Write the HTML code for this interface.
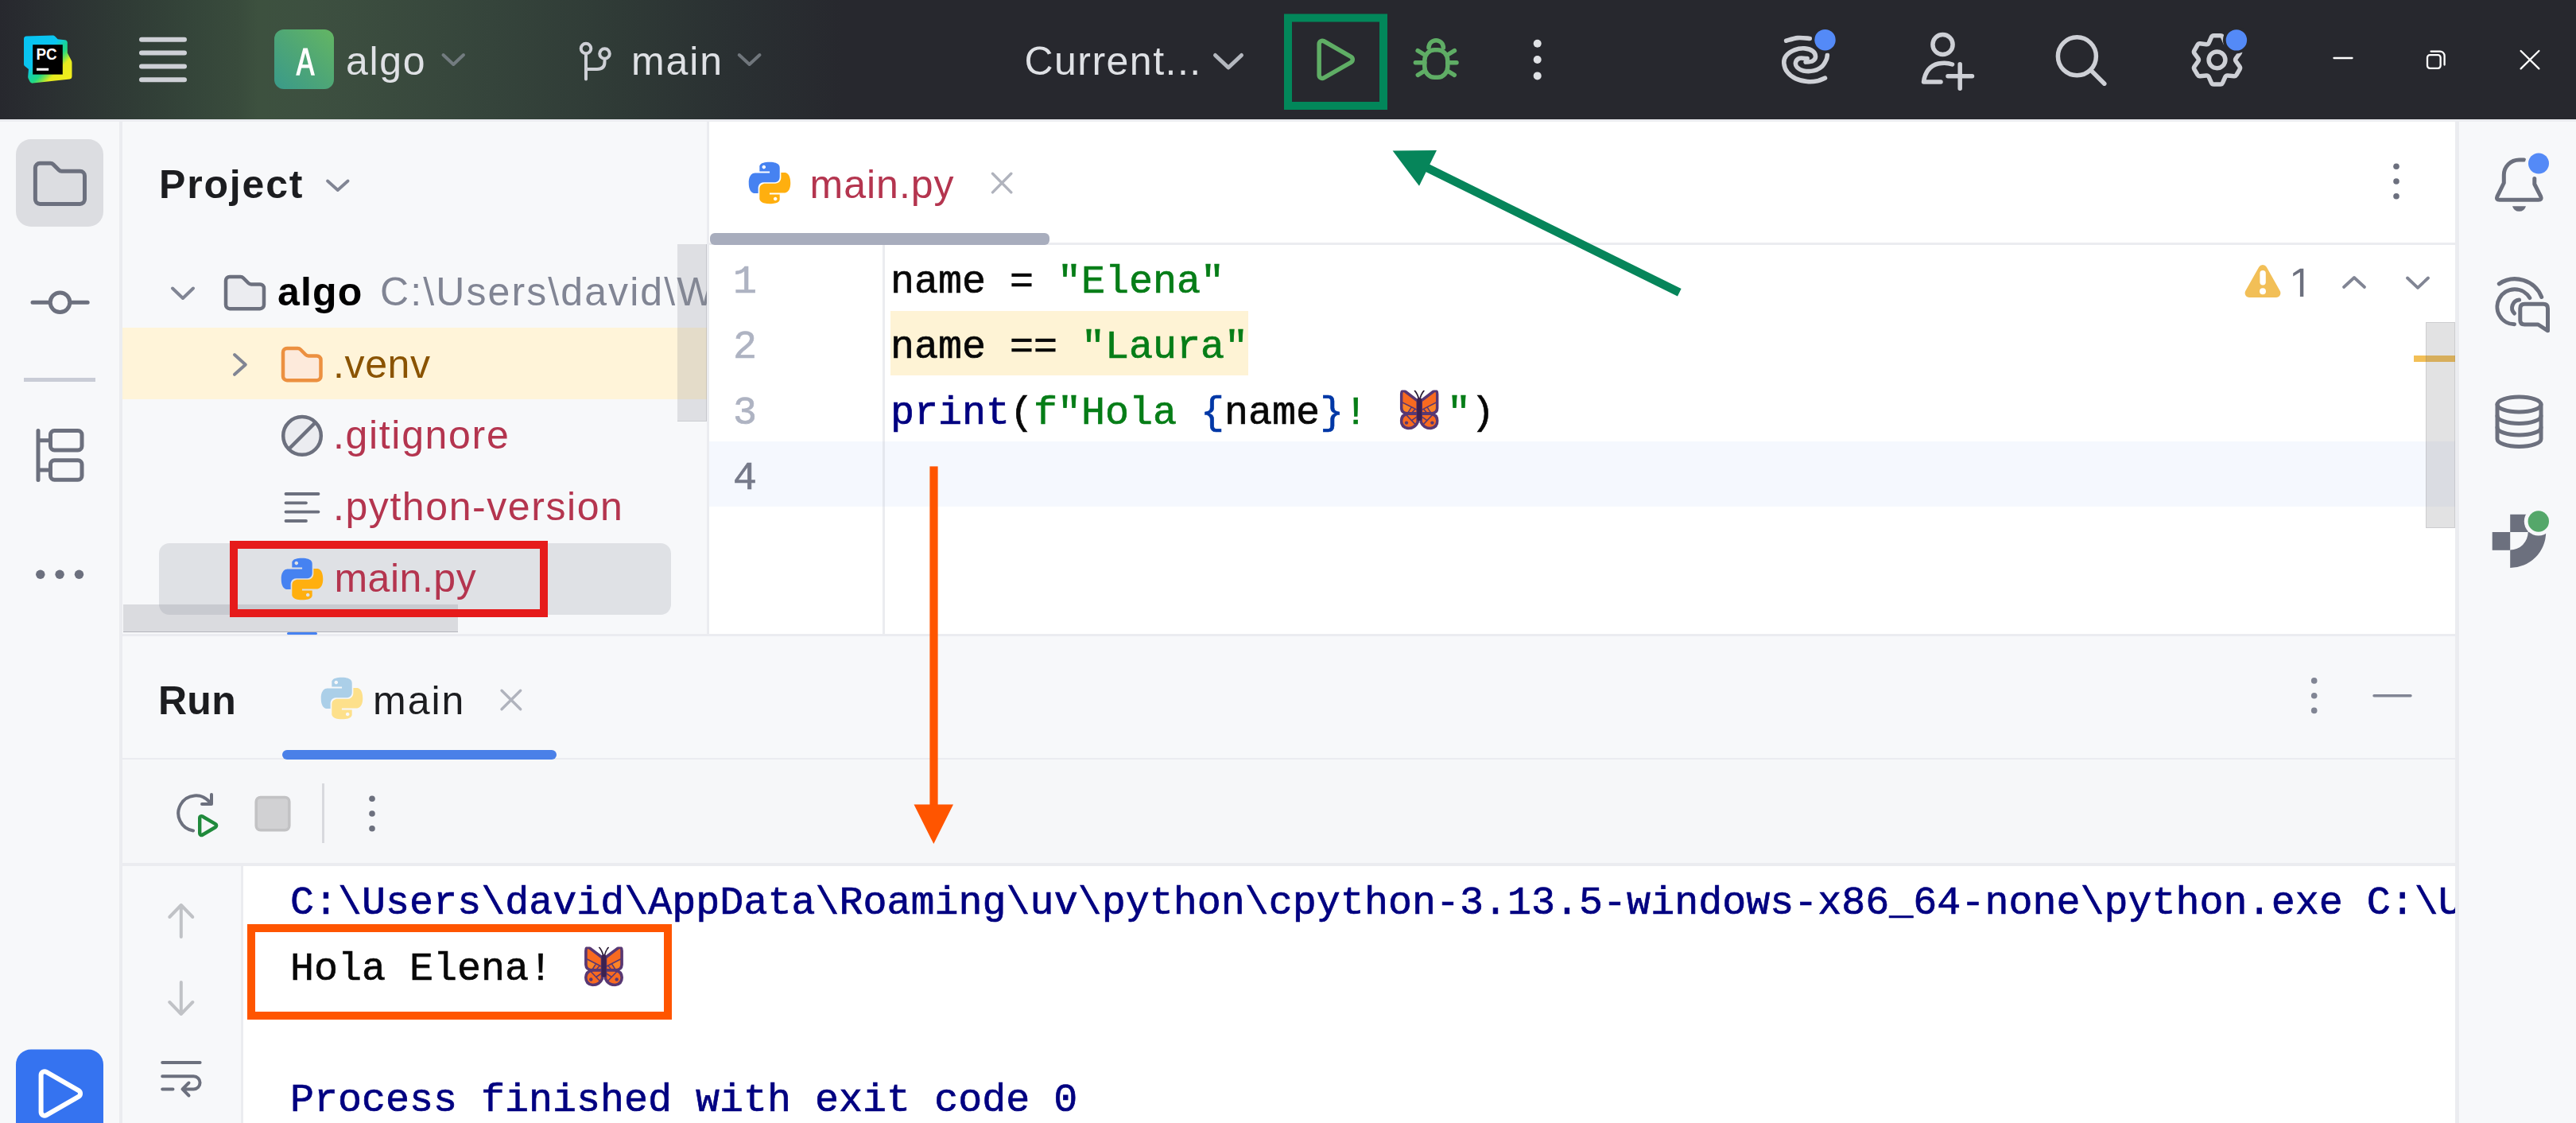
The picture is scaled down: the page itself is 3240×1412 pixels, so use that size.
<!DOCTYPE html>
<html>
<head>
<meta charset="utf-8">
<title>algo – main.py</title>
<style>
*{box-sizing:border-box;margin:0;padding:0}
html,body{width:3240px;height:1412px;overflow:hidden;background:#f7f8fa}
body{font-family:"Liberation Sans",sans-serif;position:relative}
#root{position:absolute;left:0;top:0;width:3240px;height:1412px;overflow:hidden;background:#f7f8fa}
.abs{position:absolute}
.t{position:absolute;white-space:nowrap;line-height:1;font-size:50px;font-family:"Liberation Sans",sans-serif}
.m{position:absolute;white-space:pre;line-height:1;font-size:50px;font-family:"Liberation Mono",monospace;-webkit-text-stroke:0.7px currentColor}
svg{position:absolute;left:0;top:0;overflow:visible}
/* title bar */
#titlebar{left:0;top:0;width:3240px;height:150px;background:#27282e;overflow:hidden}
#tb-glow{left:0;top:0;width:1200px;height:150px;background:linear-gradient(to right,#27282e 0px,#2a2e31 50px,#2f3a35 150px,#35463a 250px,#394b3c 300px,#3d513f 325px,#3d5040 390px,#3a4b3e 490px,#35443b 620px,#2f3a36 780px,#2a3032 920px,#27282e 1060px)}
#tb-line{left:0;top:150px;width:3240px;height:3px;background:#ebecf0}
/* panels */
#leftbar{left:0;top:153px;width:150px;height:1259px;background:#f7f8fa}
#leftbar-b{left:150px;top:153px;width:4px;height:1259px;background:#ebecf0}
#project{left:154px;top:153px;width:735px;height:644px;background:#f7f8fa;overflow:hidden}
#proj-b{left:889px;top:153px;width:3px;height:644px;background:#ebecf0}
#editor{left:892px;top:153px;width:2196px;height:644px;background:#fff;overflow:hidden}
#rightbar-b{left:3088px;top:153px;width:5px;height:1259px;background:#ebecf0}
#rightbar{left:3093px;top:153px;width:147px;height:1259px;background:#f7f8fa}
#hsplit{left:154px;top:797px;width:2934px;height:3px;background:#ebecf0}
#run{left:154px;top:800px;width:2934px;height:612px;background:#f7f8fa;overflow:hidden}
</style>
</head>
<body>
<div id="root">

<!-- ================= TITLE BAR ================= -->
<div id="titlebar" class="abs">
  <div id="tb-glow" class="abs"></div>
</div>
<div id="tb-line" class="abs"></div>

<!-- ================= PANELS ================= -->
<div id="leftbar" class="abs"></div>
<div id="leftbar-b" class="abs"></div>
<div id="project" class="abs"></div>
<div id="proj-b" class="abs"></div>
<div id="editor" class="abs"></div>
<div id="rightbar-b" class="abs"></div>
<div id="rightbar" class="abs"></div>
<div id="hsplit" class="abs"></div>
<div id="run" class="abs"></div>

<!--TB-START--><!-- title bar content -->
<svg width="3240" height="150" viewBox="0 0 3240 150" style="z-index:2">
  <defs>
    <linearGradient id="gA" x1="0" y1="1" x2="1" y2="0">
      <stop offset="0" stop-color="#3a9a8a"/><stop offset="0.5" stop-color="#4ea676"/><stop offset="1" stop-color="#64b663"/>
    </linearGradient>
    <linearGradient id="pc1" gradientUnits="userSpaceOnUse" x1="32" y1="46" x2="88" y2="102">
      <stop offset="0" stop-color="#07c3f2"/><stop offset="0.40" stop-color="#0bc5f0"/><stop offset="0.52" stop-color="#17d1a0"/><stop offset="0.60" stop-color="#21d983"/><stop offset="0.68" stop-color="#7fe34a"/><stop offset="0.75" stop-color="#e6ec20"/><stop offset="1" stop-color="#f4ee1b"/>
    </linearGradient>
  </defs>
  <!-- PyCharm logo -->
  <path d="M30 49 Q30 45.7 33.3 45.6 L66.5 44.4 Q68 44.3 69 45.5 L72.7 49.2 L81.5 50.2 Q84.5 50.5 84.8 53.5 V66.5 L90 76.5 Q90.5 77.5 90.5 79 V96 Q90.5 99 87.7 99.5 L41.5 104.6 Q38.5 104.9 37.5 102.500 L35.5 98.5 Q35 97 35.3 95 L36 87 L31 83 Q30 82 30 80.5 Z" fill="url(#pc1)"/>
  <rect x="41.200" y="56.200" width="37.600" height="37.400" fill="#000"/>
  <text x="45.400" y="75" font-family="Liberation Sans, sans-serif" font-weight="700" font-size="19.800" fill="#fff" textLength="26.200" lengthAdjust="spacingAndGlyphs">PC</text>
  <rect x="46" y="85.700" width="15.200" height="3.100" fill="#fff"/>
  <!-- hamburger -->
  <g stroke="#ced0d6" stroke-width="6" stroke-linecap="round">
    <line x1="178" y1="49.8" x2="232" y2="49.8"/><line x1="178" y1="66.6" x2="232" y2="66.6"/>
    <line x1="178" y1="83.4" x2="232" y2="83.4"/><line x1="178" y1="100.2" x2="232" y2="100.2"/>
  </g>
  <!-- project badge -->
  <rect x="345" y="37" width="75" height="75" rx="12" fill="url(#gA)"/>
  <path d="M372.2 94.7 L381.4 60.4 H386.8 L396 94.7 H391.4 L389 85.4 H379.2 L376.800 94.7 Z M380.300 81.300 H387.900 L384.100 66.500 Z" fill="#fff" fill-rule="evenodd"/>
  <polyline points="557.5,69 570.3,81 583,69" fill="none" stroke="#737c80" stroke-width="4" stroke-linecap="round" stroke-linejoin="round"/>
  <!-- branch icon -->
  <g fill="none" stroke="#ced0d6" stroke-width="4" stroke-linecap="round">
    <circle cx="737" cy="61" r="6.3"/><circle cx="760.5" cy="67.5" r="6.3"/>
    <path d="M737 69.5 V99.5 M760.5 76 V78 Q760.5 87 751 87 H738"/>
  </g>
  <polyline points="929.7,69 942.6,81 955.5,69" fill="none" stroke="#70767c" stroke-width="4" stroke-linecap="round" stroke-linejoin="round"/>
  <!-- run config chevron -->
  <polyline points="1528.5,69.5 1545,85 1561.5,69.5" fill="none" stroke="#b4b8bf" stroke-width="5" stroke-linecap="round" stroke-linejoin="round"/>
  <!-- highlighted run -->
  <rect x="1620" y="22.5" width="120" height="110.5" fill="none" stroke="#02875a" stroke-width="10"/>
  <path d="M1659.15 55.22 A4.00 4.00 0 0 1 1665.14 51.75 L1699.27 71.38 A4.00 4.00 0 0 1 1699.27 78.32 L1665.14 97.95 A4.00 4.00 0 0 1 1659.15 94.48 Z" fill="none" stroke="#5fad65" stroke-width="5.500"/>
  <!-- debug -->
  <g fill="none" stroke="#5fad65" stroke-width="5.500" stroke-linecap="round">
    <rect x="1791.800" y="62.650" width="29" height="34.650" rx="12.500" ry="13.500"/>
    <path d="M1797 59.900 A9.200 9.200 0 0 1 1815.400 59.900"/>
    <path d="M1792 69 L1783.200 63.700 M1791.800 78.700 H1780.300 M1792 89 L1783.300 94.300 M1820.600 69 L1829.400 63.700 M1820.800 78.700 H1832 M1820.600 89 L1829.300 94.300"/>
  </g>
  <g fill="#dfe1e5"><circle cx="1933.7" cy="54.7" r="5"/><circle cx="1933.7" cy="75" r="5"/><circle cx="1933.7" cy="95.4" r="5"/></g>
  <!-- AI swirl -->
  <g fill="none" stroke="#ced0d6" stroke-width="5.600" stroke-linecap="round">
    <path d="M2246.63 51.23 C2249.04 50.63 2256.12 48.10 2261.06 47.63 C2266.00 47.16 2273.74 48.30 2276.28 48.43"/>
    <path d="M2271.07 78.08 C2272.48 77.88 2277.42 77.94 2279.49 76.88 C2281.56 75.81 2283.36 73.74 2283.49 71.67 C2283.63 69.60 2282.56 66.26 2280.29 64.46 C2278.02 62.65 2273.74 61.12 2269.87 60.85 C2266.00 60.58 2260.92 61.32 2257.05 62.85 C2253.18 64.39 2248.84 67.26 2246.63 70.06 C2244.43 72.87 2243.56 76.21 2243.83 79.68 C2244.10 83.15 2245.77 87.69 2248.24 90.90 C2250.71 94.10 2254.51 96.97 2258.65 98.91 C2262.79 100.85 2268.54 102.05 2273.08 102.52 C2277.62 102.98 2282.16 102.45 2285.90 101.71 C2289.64 100.98 2293.91 98.71 2295.51 98.11"/>
    <path d="M2273.08 73.67 C2271.47 73.60 2265.87 72.53 2263.46 73.27 C2261.06 74.00 2259.19 76.21 2258.65 78.08 C2258.12 79.95 2258.65 82.68 2260.26 84.49 C2261.86 86.29 2264.80 88.16 2268.27 88.89 C2271.74 89.63 2277.22 89.76 2281.09 88.89 C2284.96 88.03 2288.84 86.02 2291.51 83.69 C2294.18 81.35 2295.98 77.28 2297.12 74.87 C2298.25 72.47 2298.12 70.20 2298.32 69.26"/>
  </g>
  <circle cx="2295.500" cy="50.200" r="16.500" fill="#27282e"/>
  <circle cx="2295.500" cy="50.200" r="13.200" fill="#548af7"/>
  <!-- add user -->
  <g fill="none" stroke="#ced0d6" stroke-width="5.5" stroke-linecap="round" stroke-linejoin="round">
    <circle cx="2443.5" cy="56" r="12.6"/>
    <path d="M2441 103 H2419.5 Q2422 84 2438 80 Q2448 78 2455.5 81"/>
    <path d="M2450 95.7 H2480.5 M2465.2 80.7 V111.2"/>
  </g>
  <!-- search -->
  <g fill="none" stroke="#ced0d6" stroke-width="5.5" stroke-linecap="round">
    <circle cx="2612.4" cy="70.8" r="24"/><path d="M2629.8 88.2 L2646.8 105.2"/>
  </g>
  <!-- gear -->
  <g fill="none" stroke="#ced0d6" stroke-width="5.5" stroke-linejoin="round">
    <path id="gearpath" d="M2795.57 46.58 A3.20 3.20 0 0 0 2792.65 44.68 L2784.35 44.68 A3.20 3.20 0 0 0 2781.43 46.58 L2778.25 53.77 A3.20 3.20 0 0 1 2774.98 55.65 L2767.17 54.82 A3.20 3.20 0 0 0 2764.05 56.40 L2759.91 63.58 A3.20 3.20 0 0 0 2760.09 67.07 L2764.72 73.41 A3.20 3.20 0 0 1 2764.72 77.19 L2760.09 83.53 A3.20 3.20 0 0 0 2759.91 87.02 L2764.05 94.20 A3.20 3.20 0 0 0 2767.17 95.78 L2774.98 94.95 A3.20 3.20 0 0 1 2778.25 96.83 L2781.43 104.02 A3.20 3.20 0 0 0 2784.35 105.92 L2792.65 105.92 A3.20 3.20 0 0 0 2795.57 104.02 L2798.75 96.83 A3.20 3.20 0 0 1 2802.02 94.95 L2809.83 95.78 A3.20 3.20 0 0 0 2812.95 94.20 L2817.09 87.02 A3.20 3.20 0 0 0 2816.91 83.53 L2812.28 77.19 A3.20 3.20 0 0 1 2812.28 73.41 L2816.91 67.07 A3.20 3.20 0 0 0 2817.09 63.58 L2812.95 56.40 A3.20 3.20 0 0 0 2809.83 54.82 L2802.02 55.65 A3.20 3.20 0 0 1 2798.75 53.77 Z"/>
    <circle cx="2788.500" cy="75.300" r="10.400"/>
  </g>
  <circle cx="2812.900" cy="50.400" r="17" fill="#27282e"/>
  <circle cx="2812.900" cy="50.400" r="13.200" fill="#548af7"/>
  <!-- window controls -->
  <g fill="none" stroke="#fff" stroke-width="2.3" stroke-linecap="round">
    <path d="M2935.5 73 H2958.5"/>
    <rect x="3053" y="69.2" width="16.6" height="16.6" rx="3.2"/>
    <path d="M3057.5 64.6 H3069 A5.6 5.6 0 0 1 3074.6 70.2 V81.5"/>
    <path d="M3170.6 64 L3193.4 86.4 M3193.4 64 L3170.6 86.4"/>
  </g>
</svg>
<div class="t" id="t-algo" style="left:435.00px;top:52.4px;color:#dfe1e5;z-index:3;letter-spacing:1.667px">algo</div>
<div class="t" id="t-main" style="left:794.00px;top:52.4px;color:#dfe1e5;z-index:3;letter-spacing:1.932px">main</div>
<div class="t" id="t-cur" style="left:1288.40px;top:52.4px;color:#dfe1e5;z-index:3;letter-spacing:1.487px">Current...</div>
<!--TB-END-->
<!--LB-START--><!-- left toolbar -->
<div class="abs" style="left:20px;top:175px;width:110px;height:110px;border-radius:19px;background:#dcdde1"></div>
<svg width="160" height="1412" viewBox="0 0 160 1412" style="z-index:2">
  <g fill="none" stroke="#6c707e" stroke-width="5" stroke-linecap="round" stroke-linejoin="round">
    <!-- folder -->
    <path d="M44.4 211 A5.8 5.8 0 0 1 50.2 205.2 H63.5 A5 5 0 0 1 67 206.7 L74 213.7 A5 5 0 0 0 77.5 215.2 H100.7 A5.8 5.8 0 0 1 106.5 221 V250.6 A5.8 5.8 0 0 1 100.7 256.4 H50.2 A5.8 5.8 0 0 1 44.4 250.6 Z"/>
    <!-- commit -->
    <circle cx="75.5" cy="380.3" r="12.3"/>
    <path d="M41 380.3 H62 M89 380.3 H110.2"/>
    <!-- structure -->
    <path d="M48 541.5 V603.5 M49 553.7 H61 M49 591 H61"/>
    <rect x="63.5" y="541.5" width="39.5" height="24.5" rx="5"/>
    <rect x="63.5" y="578.8" width="39.5" height="24.5" rx="5"/>
  </g>
  <rect x="30" y="475" width="90" height="5" fill="#c9ccd6"/>
  <g fill="#6c707e"><circle cx="50.8" cy="722.2" r="5.7"/><circle cx="75.1" cy="722.2" r="5.7"/><circle cx="99.5" cy="722.2" r="5.7"/></g>
  <!-- run tool window button -->
  <rect x="20" y="1319.5" width="110" height="110" rx="19" fill="#3573f0"/>
  <path d="M51.60 1351.77 A4.50 4.50 0 0 1 58.34 1347.87 L98.80 1371.10 A4.50 4.50 0 0 1 98.80 1378.90 L58.34 1402.13 A4.50 4.50 0 0 1 51.60 1398.23 Z" fill="none" stroke="#fff" stroke-width="6"/>
</svg>
<!--LB-END-->
<!--PJ-START--><!-- project panel -->
<svg width="0" height="0" style="position:absolute">
  <defs>
    <symbol id="py" viewBox="0 0 16 16">
      <path d="M7.96 1C4.4 1 4.62 2.55 4.62 2.55V4.16H8.02V4.64H3.27C3.27 4.64 1 4.38 1 7.99C1 11.6 2.98 11.47 2.98 11.47H4.17V9.8C4.17 9.8 4.1 7.81 6.12 7.81H9.5C9.5 7.81 11.39 7.84 11.39 5.97V2.88C11.39 2.88 11.68 1 7.96 1ZM6.08 2.08C6.42 2.08 6.69 2.35 6.69 2.69C6.69 3.03 6.42 3.3 6.08 3.3C5.74 3.3 5.47 3.03 5.47 2.69C5.47 2.35 5.74 2.08 6.08 2.08Z" fill="var(--pb,#4682f1)"/>
      <path d="M8.04 15C11.6 15 11.38 13.45 11.38 13.45V11.84H7.98V11.36H12.73C12.73 11.36 15 11.62 15 8.01C15 4.4 13.02 4.53 13.02 4.53H11.83V6.2C11.83 6.2 11.9 8.19 9.88 8.19H6.5C6.5 8.19 4.61 8.16 4.61 10.03V13.12C4.61 13.12 4.32 15 8.04 15ZM9.92 13.92C9.58 13.92 9.31 13.65 9.31 13.31C9.31 12.97 9.58 12.7 9.92 12.7C10.26 12.7 10.53 12.97 10.53 13.31C10.53 13.65 10.26 13.92 9.92 13.92Z" fill="var(--py,#ffaf0f)"/>
    </symbol>
  </defs>
</svg>
<div class="t" id="t-project" style="left:200.00px;top:207.4px;color:#1c1d20;font-weight:700;letter-spacing:1.835px">Project</div>
<!-- rows -->
<div class="abs" style="left:154px;top:412px;width:735px;height:90px;background:#fff4d9"></div>
<div class="abs" style="left:200px;top:682.5px;width:644px;height:90px;border-radius:13px;background:#dfe1e5"></div>
<svg width="900" height="800" viewBox="0 0 900 800" style="z-index:2">
  <polyline points="412,227.5 424.8,239 437.6,227.5" fill="none" stroke="#818594" stroke-width="3.8" stroke-linecap="round" stroke-linejoin="round"/>
  <!-- row1 -->
  <polyline points="217,362.5 230,375 243,362.5" fill="none" stroke="#818594" stroke-width="4" stroke-linecap="round" stroke-linejoin="round"/>
  <path d="M284 353 A5 5 0 0 1 289 348 H302.5 A5 5 0 0 1 306 349.5 L312.5 356 A5 5 0 0 0 316 357.5 H327 A5 5 0 0 1 332 362.5 V383.2 A5 5 0 0 1 327 388.2 H289 A5 5 0 0 1 284 383.2 Z" fill="#ebecf0" stroke="#6c707e" stroke-width="4.5" stroke-linejoin="round"/>
  <!-- row2 venv -->
  <polyline points="295,446 308.8,458.4 295,470.8" fill="none" stroke="#818594" stroke-width="4" stroke-linecap="round" stroke-linejoin="round"/>
  <path d="M356 443 A5 5 0 0 1 361 438 H374.5 A5 5 0 0 1 378 439.5 L384.5 446 A5 5 0 0 0 388 447.5 H398.5 A5 5 0 0 1 403.500 452.5 V473.2 A5 5 0 0 1 398.5 478.2 H361 A5 5 0 0 1 356 473.2 Z" fill="#fdeadb" stroke="#ec9040" stroke-width="4.5" stroke-linejoin="round"/>
  <!-- row3 gitignore -->
  <circle cx="380" cy="547.9" r="23.8" fill="#ebecf0" stroke="#6c707e" stroke-width="4.5"/>
  <path d="M363.5 564.4 L396.5 531.4" stroke="#6c707e" stroke-width="4.5"/>
  <!-- row4 text file -->
  <g stroke="#6c707e" stroke-width="3.8" stroke-linecap="round">
    <path d="M359.5 621 H400.5 M359.5 632.3 H385 M359.5 643.6 H400.5 M359.5 655 H385"/>
  </g>
  <!-- row5 python -->
  <use href="#py" x="350" y="698" width="60" height="60"/>
  <!-- sliver of next row icon -->
  <rect x="361" y="795" width="38" height="3" rx="1.5" fill="#4682f1"/>
</svg>
<div class="t" id="t-algo2" style="left:349.00px;top:341.9px;color:#000;font-weight:700;z-index:2;letter-spacing:1.165px">algo</div>
<div class="t" id="t-path" style="left:478px;top:341.9px;color:#818594;z-index:2;width:411px;overflow:hidden;letter-spacing:2.1px">C:\Users\david\W</div>
<div class="t" id="t-venv" style="left:419.00px;top:432.7px;color:#8a5300;z-index:2;letter-spacing:0.625px">.venv</div>
<div class="t" id="t-git" style="left:419.00px;top:522.2px;color:#b4354f;z-index:2;letter-spacing:1.667px">.gitignore</div>
<div class="t" id="t-pyv" style="left:419.00px;top:612.2px;color:#b4354f;z-index:2;letter-spacing:1.571px">.python-version</div>
<div class="t" id="t-mainpy" style="left:420.40px;top:702.2px;color:#b4354f;z-index:2;letter-spacing:0.534px">main.py</div>
<!-- project scrollbars -->
<div class="abs" style="left:852px;top:307px;width:37px;height:223px;background:rgba(140,142,150,0.23);border-right:1px solid rgba(120,122,130,0.22);border-bottom:1px solid rgba(120,122,130,0.18);z-index:3"></div>
<div class="abs" style="left:155px;top:760px;width:421px;height:35px;background:rgba(140,142,150,0.27);border-bottom:1px solid rgba(110,112,120,0.35);z-index:3"></div>
<!--PJ-END-->
<!--ED-START--><!-- editor -->
<svg width="0" height="0" style="position:absolute">
  <defs>
    <symbol id="bfly" viewBox="0 0 49 50">
      <!-- antennae -->
      <path d="M24 12 Q22.5 5 18.8 0.8 M25 12 Q26.5 5 30.2 0.8" fill="none" stroke="#2a1c33" stroke-width="1.7" stroke-linecap="round"/>
      <!-- upper wings -->
      <path d="M22.5 13.5 L6.8 1.6 Q2 -1.2 1.9 5 V22.5 Q2.2 29 10 29.3 H22.5 Z" fill="#f86a20" stroke="#583873" stroke-width="3.6" stroke-linejoin="round"/>
      <path d="M26.5 13.5 L42.2 1.6 Q47 -1.2 47.1 5 V22.5 Q46.8 29 39 29.3 H26.500 Z" fill="#f86a20" stroke="#583873" stroke-width="3.6" stroke-linejoin="round"/>
      <!-- lower wings -->
      <path d="M22.5 29.5 V40 Q19 48 10.5 48 Q1.8 47 1.8 38.5 Q2.2 30.5 10.5 29.5 Z" fill="#f86a20" stroke="#583873" stroke-width="3.6" stroke-linejoin="round"/>
      <path d="M26.5 29.5 V40 Q30 48 38.5 48 Q47.200 47 47.2 38.5 Q46.8 30.5 38.5 29.5 Z" fill="#f86a20" stroke="#583873" stroke-width="3.6" stroke-linejoin="round"/>
      <!-- lighter patches -->
      <path d="M4.2 16.8 L15.5 22.5 L12 27 H8 Q4.3 26.5 4.2 22.5 Z" fill="#fb8427"/>
      <path d="M44.8 16.8 L33.5 22.5 L37 27 H41 Q44.7 26.5 44.8 22.5 Z" fill="#fb8427"/>
      <!-- veins -->
      <g fill="none" stroke="#583873" stroke-width="1.6" stroke-linecap="round">
        <path d="M3.5 15.5 L22 25 M14.5 21.500 L10.500 27.800 M16 27.500 L19 24"/>
        <path d="M45.5 15.5 L27 25 M34.5 21.500 L38.5 27.800 M33 27.500 L30 24"/>
        <path d="M8.500 31.500 L19.500 43 M22 33 L14.800 38"/>
        <path d="M40.5 31.500 L29.5 43 M27 33 L34.200 38"/>
      </g>
      <circle cx="8.3" cy="41" r="2.2" fill="#583873"/><circle cx="40.7" cy="41" r="2.2" fill="#583873"/>
      <!-- body -->
      <rect x="21.500" y="9.500" width="6" height="28.800" rx="3" fill="#3b2150"/>
    </symbol>
  </defs>
</svg>
<!-- tabs -->

<svg width="3240" height="800" viewBox="0 0 3240 800" style="z-index:2">
  <use href="#py" x="938" y="200" width="60" height="60"/>
  <path d="M1248.500 218.300 L1271.800 241.900 M1271.800 218.300 L1248.500 241.900" stroke="#b0b3bd" stroke-width="3.400" stroke-linecap="round"/>
  <g fill="#6c707e"><circle cx="3014" cy="209.300" r="3.800"/><circle cx="3014" cy="228" r="3.800"/><circle cx="3014" cy="246.800" r="3.800"/></g>
  <!-- inspections widget -->
  <path d="M2841.21 335.79 A5.50 5.50 0 0 1 2850.79 335.79 L2867.67 365.70 A5.50 5.50 0 0 1 2862.88 373.90 L2829.12 373.90 A5.50 5.50 0 0 1 2824.33 365.70 Z" fill="#f2bf57"/>
  <rect x="2842.400" y="340" width="7.400" height="18.500" rx="3.700" fill="#fff"/>
  <circle cx="2846" cy="366.300" r="4" fill="#fff"/>
  <polyline points="2948,361 2961,349 2974,361" fill="none" stroke="#818594" stroke-width="3.800" stroke-linecap="round" stroke-linejoin="round"/>
  <polyline points="3028,349.500 3041,361.800 3054,349.500" fill="none" stroke="#818594" stroke-width="3.800" stroke-linecap="round" stroke-linejoin="round"/>
</svg>
<div class="t" id="t-tab" style="left:1018.50px;top:207.200px;color:#b4354f;z-index:2;letter-spacing:1.001px">main.py</div>
<div class="abs" style="left:892px;top:305px;width:2196px;height:3px;background:#ebecf0"></div>
<div class="abs" style="left:892.500px;top:292.500px;width:427.500px;height:15px;border-radius:6px;background:#a8adbd;z-index:2"></div>
<!-- gutter line -->
<div class="abs" style="left:1110px;top:308px;width:2.500px;height:489px;background:#ebecf0"></div>
<!-- current line -->
<div class="abs" style="left:892px;top:555px;width:2196px;height:82px;background:#f5f8fe"></div>
<div class="abs" style="left:1110px;top:555px;width:2.500px;height:82px;background:#e4e7ee"></div>
<!-- warning highlight -->
<div class="abs" style="left:1120px;top:390.500px;width:450px;height:81.500px;background:#fef3d5"></div>
<!-- line numbers -->
<div class="m" style="left:922px;top:329.700px;color:#aeb3c2;z-index:2">1</div>
<div class="m" style="left:922px;top:412.200px;color:#aeb3c2;z-index:2">2</div>
<div class="m" style="left:922px;top:494.700px;color:#aeb3c2;z-index:2">3</div>
<div class="m" style="left:922px;top:577.200px;color:#767a8a;z-index:2">4</div>
<!-- code -->
<div class="m" id="c1" style="left:1120px;top:329.700px;color:#080808;z-index:2">name = <span style="color:#067d17">"Elena"</span></div>
<div class="m" id="c2" style="left:1120px;top:412.200px;color:#080808;z-index:2">name == <span style="color:#067d17">"Laura"</span></div>
<div class="m" id="c3" style="left:1120px;top:494.700px;color:#080808;z-index:2"><span style="color:#000080">print</span>(<span style="color:#067d17">f"Hola </span><span style="color:#0037a6">{</span>name<span style="color:#0037a6">}</span><span style="color:#067d17">! </span></div>
<div class="m" id="c3b" style="left:1820px;top:494.700px;color:#080808;z-index:2"><span style="color:#067d17">"</span>)</div>
<svg width="3240" height="800" viewBox="0 0 3240 800" style="z-index:2"><use href="#bfly" x="1760.700" y="490.600" width="49" height="50"/></svg>
<svg width="3240" height="800" viewBox="0 0 3240 800" style="z-index:2"><path d="M2892.900 337.800 H2897.300 V373 H2892.900 V342.200 L2884.200 347.500 V343.400 Z" fill="#6c707e"/></svg>
<!-- editor scrollbar -->
<div class="abs" style="left:3036px;top:447px;width:52px;height:8px;background:#f2bf57;z-index:2"></div>
<div class="abs" style="left:3051px;top:405px;width:37px;height:259px;background:rgba(110,110,115,0.2);border:1px solid rgba(100,100,105,0.16);z-index:3"></div>
<!--ED-END-->
<!--RB-START--><!-- right toolbar -->
<svg width="3240" height="800" viewBox="0 0 3240 800" style="z-index:2">
  <g fill="none" stroke="#6c707e" stroke-width="5" stroke-linecap="round" stroke-linejoin="round">
    <!-- bell -->
    <path d="M3174.600 200.900 H3168.500 A19.200 19.200 0 0 0 3149.300 220.100 V230 L3141 246.800 Q3139 251.300 3143.800 251.300 H3192.800 Q3197.600 251.300 3195.600 246.800 L3187.800 231.500 V224.500"/>
    <!-- AI chat -->
    <path d="M3143.300 356.800 A36 36 0 0 1 3196.700 373.500"/>
    <path d="M3162.500 407.800 A22 22 0 1 1 3181.800 374.500"/>
    <path d="M3168.600 377 A10 10 0 0 0 3162.500 394"/>
    <path d="M3175.300 382.200 H3199 Q3204.500 382.200 3204.500 387.700 V415.800 L3192.300 408 H3175.300 Q3169.800 408 3169.800 402.500 V387.700 Q3169.800 382.200 3175.300 382.200 Z" fill="#f7f8fa"/>
    <!-- database -->
    <ellipse cx="3168.500" cy="508.500" rx="27.500" ry="9.500"/>
    <path d="M3141 508.500 V552 A27.500 9.500 0 0 0 3196 552 V508.500"/>
    <path d="M3141 523 A27.500 9.500 0 0 0 3196 523 M3141 537.500 A27.500 9.500 0 0 0 3196 537.500"/>
  </g>
  <path d="M3160 259.200 H3177 Q3175 265.800 3168.500 265.800 Q3162 265.800 3160 259.200 Z" fill="#6c707e"/>
  <circle cx="3193" cy="205.500" r="17" fill="#f7f8fa"/>
  <circle cx="3193" cy="205.500" r="13" fill="#548af7"/>
  <!-- endpoints-like icon -->
  <g fill="#6c707e">
    <rect x="3134.700" y="669" width="22.500" height="22.800"/>
    <rect x="3157.200" y="646.800" width="22.500" height="22.200"/>
    <path d="M3157.200 714 A45 45 0 0 0 3202.200 669 H3179.700 A22.500 22.500 0 0 1 3157.200 691.500 Z"/>
  </g>
  <circle cx="3192.800" cy="655.500" r="18" fill="#f7f8fa"/>
  <circle cx="3192.800" cy="655.500" r="13.200" fill="#55a76a"/>
</svg>
<!--RB-END-->
<!--RN-START--><!-- run tool window -->
<div class="abs" style="left:154px;top:952.500px;width:2934px;height:2.500px;background:#ebecf0"></div>
<div class="abs" style="left:154px;top:955px;width:2934px;height:130px;background:#f6f7f9"></div>
<div class="abs" style="left:154px;top:1085px;width:2934px;height:4.700px;background:#ebecf0"></div>
<div class="abs" style="left:154px;top:1089px;width:149px;height:330px;background:#f7f8fa"></div>
<div class="abs" style="left:303px;top:1089px;width:2.500px;height:330px;background:#ebecf0"></div>
<div class="abs" style="left:305.500px;top:1089px;width:2782.500px;height:330px;background:#fff"></div>
<div class="abs" style="left:355px;top:943px;width:345px;height:12px;border-radius:6px;background:#4a80e8;z-index:2"></div>
<div class="t" id="t-run" style="left:199.00px;top:855.700px;color:#1c1d20;font-weight:700;z-index:2;letter-spacing:0.250px">Run</div>
<div class="t" id="t-runmain" style="left:469.00px;top:855.700px;color:#1c1d20;z-index:2;letter-spacing:2.000px">main</div>
<svg width="3240" height="1412" viewBox="0 0 3240 1412" style="z-index:2">
  <use href="#py" x="400" y="848" width="60" height="60" style="--pb:#abcfe8;--py:#fde08b"/>
  <path d="M631 868.300 L654.700 891.700 M654.700 868.300 L631 891.700" stroke="#b0b3bd" stroke-width="3.400" stroke-linecap="round"/>
  <g fill="#818594"><circle cx="2910.700" cy="855.900" r="3.800"/><circle cx="2910.700" cy="874.700" r="3.800"/><circle cx="2910.700" cy="893.400" r="3.800"/></g>
  <path d="M2986 874.700 H3032" stroke="#818594" stroke-width="3.400" stroke-linecap="round"/>
  <!-- rerun -->
  <g fill="none" stroke="#6c707e" stroke-width="4" stroke-linecap="round" stroke-linejoin="round">
    <path d="M243 1044.500 A22.200 22.200 0 1 1 263.500 1008.300"/>
    <path d="M266 999 V1011 H254"/>
  </g>
  <path d="M251.20 1028.35 A2.20 2.20 0 0 1 254.52 1026.45 L271.08 1036.20 A2.20 2.20 0 0 1 271.08 1040.00 L254.52 1049.75 A2.20 2.20 0 0 1 251.20 1047.85 Z" fill="#f6f7f9" stroke="#208a3c" stroke-width="4.400" stroke-linejoin="round"/>
  <!-- stop -->
  <rect x="322.200" y="1002.500" width="41.600" height="41.300" rx="5.500" fill="#d1d1d3" stroke="#c2c2c4" stroke-width="3.500"/>
  <rect x="405" y="985" width="3" height="75" fill="#d8d9de"/>
  <g fill="#6c707e"><circle cx="468" cy="1004.300" r="3.800"/><circle cx="468" cy="1023" r="3.800"/><circle cx="468" cy="1041.800" r="3.800"/></g>
  <!-- console side actions -->
  <g fill="none" stroke="#c0c2c6" stroke-width="4" stroke-linecap="round" stroke-linejoin="round">
    <path d="M227.800 1178 V1138 M213.300 1153 L227.800 1138 L242.300 1153"/>
    <path d="M227.800 1235 V1275 M213.300 1260 L227.800 1275 L242.300 1260"/>
  </g>
  <g fill="none" stroke="#6c707e" stroke-width="4" stroke-linecap="round" stroke-linejoin="round">
    <path d="M204.200 1336 H251.600 M204.200 1353.300 H243.500 A8 8 0 0 1 243.500 1369.400 H230 M204.200 1369.400 H217.500 M237.500 1361.500 L229.500 1369.400 L237.500 1377.500"/>
  </g>
  <use href="#bfly" x="735" y="1190.500" width="49" height="50"/>
</svg>
<div class="m" id="o1" style="left:365px;top:1111.200px;color:#000080;z-index:2;width:2723px;overflow:hidden;letter-spacing:0.015px">C:\Users\david\AppData\Roaming\uv\python\cpython-3.13.5-windows-x86_64-none\python.exe C:\Users</div>
<div class="m" id="o2" style="left:365px;top:1193.900px;color:#080808;z-index:2">Hola Elena! </div>
<div class="m" id="o4" style="left:365px;top:1359.200px;color:#000080;z-index:2">Process finished with exit code 0</div>
<!--RN-END-->
<!--OV-START--><!-- annotations -->
<div class="abs" style="left:289px;top:680px;width:400px;height:96px;border:10px solid #e61b1b;z-index:6"></div>
<div class="abs" style="left:311px;top:1162px;width:534px;height:119.500px;border:10px solid #ff5500;z-index:6"></div>
<svg width="3240" height="1412" viewBox="0 0 3240 1412" style="z-index:7">
  <path d="M1794 210.500 L2112.300 367.800" stroke="#06855a" stroke-width="10.500"/>
  <path d="M1751.600 189.500 L1807 189 L1785 233.800 Z" fill="#06855a"/>
  <rect x="1169.400" y="586.400" width="10.200" height="427" fill="#ff5500"/>
  <path d="M1149.500 1011.500 H1199 L1174.300 1061 Z" fill="#ff5500"/>
</svg>
<!--OV-END-->

</div>
</body>
</html>
